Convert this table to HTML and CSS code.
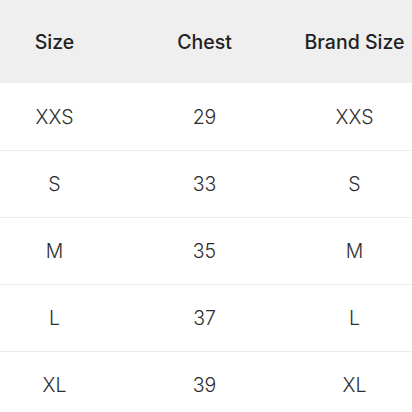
FILE: index.html
```html
<!DOCTYPE html>
<html>
<head>
<meta charset="utf-8">
<link rel="stylesheet" href="styles.css">
</head>
<body>
<div class="table">
  <div class="row head">
    <div class="cell">Size</div>
    <div class="cell">Chest</div>
    <div class="cell">Brand Size</div>
  </div>
  <div class="row">
    <div class="cell">XXS</div>
    <div class="cell">29</div>
    <div class="cell">XXS</div>
  </div>
  <div class="row">
    <div class="cell">S</div>
    <div class="cell">33</div>
    <div class="cell">S</div>
  </div>
  <div class="row">
    <div class="cell">M</div>
    <div class="cell">35</div>
    <div class="cell">M</div>
  </div>
  <div class="row">
    <div class="cell">L</div>
    <div class="cell">37</div>
    <div class="cell">L</div>
  </div>
  <div class="row">
    <div class="cell">XL</div>
    <div class="cell">39</div>
    <div class="cell">XL</div>
  </div>
</div>
</body>
</html>
```

FILE: styles.css
```css
html, body {
  margin: 0;
  padding: 0;
  background: #ffffff;
}
body {
  font-family: Inter, "Noto Sans", sans-serif;
  width: 412px;
  height: 412px;
  overflow: hidden;
}
.table {
  display: flex;
  flex-direction: column;
}
.row {
  display: grid;
  grid-template-columns: 109px 191px 109px;
  height: 66px;
  align-items: center;
  border-top: 1px solid #ebebeb;
  font-size: 19.5px;
  font-weight: 300;
  color: #2e2e2e;
}
.row.head {
  height: 83px;
  border-top: none;
  background: #efefef;
  color: #222222;
  font-weight: 500;
}
.row.head + .row {
  border-top: none;
  height: 67px;
}
.cell {
  text-align: center;
  white-space: nowrap;
}
```
